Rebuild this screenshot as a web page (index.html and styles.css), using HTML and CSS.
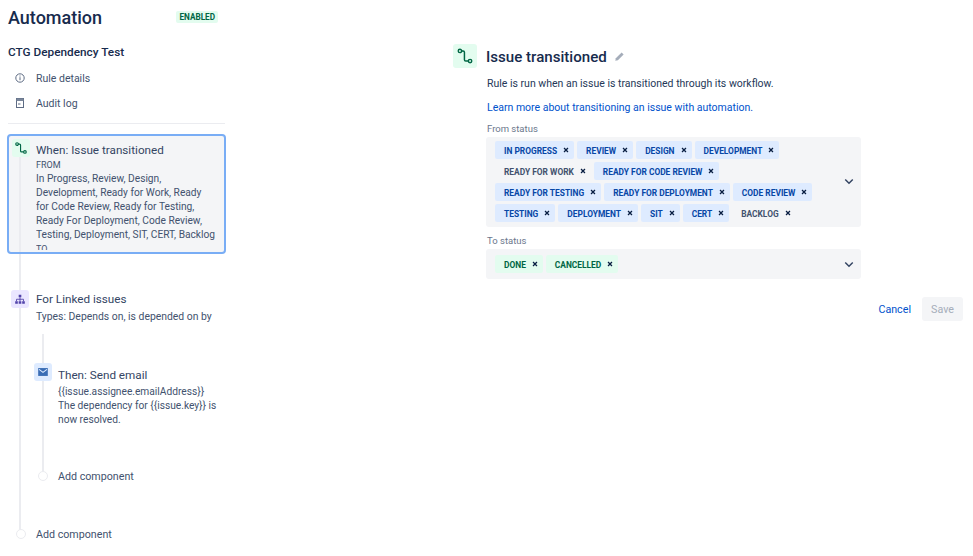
FILE: index.html
```html
<!DOCTYPE html>
<html lang="en">
<head>
<meta charset="utf-8">
<title>Automation</title>
<link rel="stylesheet" href="styles.css">
</head>
<body>
<div class="page">
  <aside class="sidebar">
    <div class="head"><h1>Automation</h1><span class="enabled">ENABLED</span></div>
    <h2>CTG Dependency Test</h2>
    <nav class="nav">
      <div class="nav-item"><svg class="nav-icon" viewBox="0 0 12 12"><circle cx="6" cy="6" r="4.2" fill="none" stroke="#5e6c84" stroke-width="1"/><rect x="5.500" y="5.200" width="1" height="3" fill="#5e6c84"/><rect x="5.500" y="3.500" width="1" height="1" fill="#5e6c84"/></svg><span>Rule details</span></div>
      <div class="nav-item"><svg class="nav-icon" viewBox="0 0 12 12"><rect x="2.500" y="1.500" width="7" height="9" fill="none" stroke="#5e6c84" stroke-width="1"/><rect x="2.500" y="1.500" width="7" height="2.500" fill="#7a869a"/><rect x="4" y="6.500" width="2.500" height="1" fill="#5e6c84"/></svg><span>Audit log</span></div>
    </nav>
    <hr class="rule">
    <div class="tree">
      <div class="card">
        <span class="badge badge-green badge-when"><svg viewBox="0 0 16 16" class="glyph"><use href="#transition"/></svg></span>
        <div class="card-title">When: Issue transitioned</div>
        <div class="card-text"><div class="small">FROM</div><div class="card-line">In Progress, Review, Design, Development, Ready for Work, Ready for Code Review, Ready for Testing, Ready For Deployment, Code Review, Testing, Deployment, SIT, CERT, Backlog</div><div class="small small-to">TO</div></div>
      </div>
      <div class="step step-linked">
        <span class="badge badge-purple"><svg viewBox="0 0 16 16" class="glyph"><path d="M6.500 3h3v3h-3zM2.500 10.500h3v3h-3zM6.500 10.500h3v3h-3zM10.500 10.500h3v3h-3z" fill="#5243aa"/><path d="M8 6v4.500M4 10.500V8.300h8v2.200" fill="none" stroke="#5243aa" stroke-width="1"/></svg></span>
        <div class="step-title">For Linked issues</div>
        <div class="step-text">Types: Depends on, is depended on by</div>
      </div>
      <div class="nested">
        <div class="step step-email">
          <span class="badge badge-blue"><svg viewBox="0 0 16 16" class="glyph"><path d="M2.500 3.500h11v9h-11z" fill="#3a6db5"/><path d="M3.500 5l4.500 3.500L12.500 5" fill="none" stroke="#deebff" stroke-width="1.200"/></svg></span>
          <div class="step-title">Then: Send email</div>
          <div class="step-text">{{issue.assignee.emailAddress}}<br>The dependency for {{issue.key}} is now resolved.</div>
        </div>
        <div class="add add-inner"><span class="dot"></span><span>Add component</span></div>
      </div>
      <div class="add add-outer"><span class="dot"></span><span>Add component</span></div>
    </div>
  </aside>
  <main class="main">
    <div class="panel">
      <div class="title-row">
        <span class="title-badge"><svg viewBox="0 0 16 16" class="title-glyph"><use href="#transition"/></svg></span>
        <h3>Issue transitioned</h3>
        <svg class="pencil" viewBox="0 0 12 12"><path d="M8.300 1.500l2.200 2.200-6.300 6.300-2.800.6.600-2.800z" fill="#a5adba"/></svg>
      </div>
      <div class="body">
        <p class="desc">Rule is run when an issue is transitioned through its workflow.</p>
        <p class="learn"><a href="#">Learn more about transitioning an issue with automation.</a></p>
        <div class="label">From status</div>
        <div class="select">
          <div class="tags">
            <span class="tag blue">IN PROGRESS<svg class="x"><use href="#x"/></svg></span>
            <span class="tag blue">REVIEW<svg class="x"><use href="#x"/></svg></span>
            <span class="tag blue">DESIGN<svg class="x"><use href="#x"/></svg></span>
            <span class="tag blue">DEVELOPMENT<svg class="x"><use href="#x"/></svg></span>
            <span class="tag plain">READY FOR WORK<svg class="x"><use href="#x"/></svg></span>
            <span class="tag blue">READY FOR CODE REVIEW<svg class="x"><use href="#x"/></svg></span>
            <span class="tag blue">READY FOR TESTING<svg class="x"><use href="#x"/></svg></span>
            <span class="tag blue">READY FOR DEPLOYMENT<svg class="x"><use href="#x"/></svg></span>
            <span class="tag blue">CODE REVIEW<svg class="x"><use href="#x"/></svg></span>
            <span class="tag blue">TESTING<svg class="x"><use href="#x"/></svg></span>
            <span class="tag blue">DEPLOYMENT<svg class="x"><use href="#x"/></svg></span>
            <span class="tag blue">SIT<svg class="x"><use href="#x"/></svg></span>
            <span class="tag blue">CERT<svg class="x"><use href="#x"/></svg></span>
            <span class="tag plain">BACKLOG<svg class="x"><use href="#x"/></svg></span>
          </div>
          <svg class="chev" viewBox="0 0 12 8"><path d="M1.500 1.500L6 6l4.500-4.500" fill="none" stroke="#344563" stroke-width="1.800"/></svg>
        </div>
        <div class="label label-to">To status</div>
        <div class="select select-to">
          <div class="tags">
            <span class="tag green">DONE<svg class="x"><use href="#x"/></svg></span>
            <span class="tag green">CANCELLED<svg class="x"><use href="#x"/></svg></span>
          </div>
          <svg class="chev" viewBox="0 0 12 8"><path d="M1.500 1.500L6 6l4.500-4.500" fill="none" stroke="#344563" stroke-width="1.800"/></svg>
        </div>
      </div>
      <div class="actions"><a href="#" class="cancel">Cancel</a><span class="save">Save</span></div>
    </div>
  </main>
</div>
<svg class="defs" width="0" height="0">
  <symbol id="transition" viewBox="0 0 16 16"><circle cx="3.500" cy="3.500" r="1.500" fill="none" stroke="#006644" stroke-width="1.300"/><path d="M5 3.500h1.300c.7 0 1.200.5 1.200 1.200v6.600c0 .7.500 1.200 1.200 1.200H11" fill="none" stroke="#006644" stroke-width="1.300"/><circle cx="12.500" cy="12.500" r="1.500" fill="none" stroke="#006644" stroke-width="1.300"/></symbol>
  <symbol id="x" viewBox="0 0 7 7"><path d="M1.200 1.200l4.600 4.600M5.800 1.200L1.200 5.800" fill="none" stroke="#091e42" stroke-width="1.500"/></symbol>
</svg>
</body>
</html>
```
FILE: styles.css
```css
* { box-sizing: border-box; }
html, body { margin: 0; padding: 0; background: #fff; }
body { font-family: Roboto, "Open Sans", "Liberation Sans", sans-serif; color: #172b4d; }
.defs { position: absolute; }
.page { display: flex; align-items: flex-start; width: 973px; height: 556px; overflow: hidden; }

.sidebar { width: 217px; margin-left: 8px; flex: none; }
.head { display: flex; justify-content: space-between; align-items: center; height: 24px; margin-top: 6px; padding-right: 7px; }
h1 { margin: 0; font-size: 18px; font-weight: 500; line-height: 24px; color: #172b4d; }
.enabled { margin-top: -2px; background: #e3fcef; color: #006644; font-size: 8.200px; font-weight: 700; line-height: 12px; padding: 0 3px; border-radius: 2px; }
h2 { margin: 12px 0 0; font-size: 11.800px; font-weight: 500; line-height: 20px; color: #172b4d; }
.nav { margin-top: 6px; display: flex; flex-direction: column; gap: 5px; }
.nav-item { display: flex; align-items: center; height: 20px; padding-left: 6px; font-size: 10.500px; color: #42526e; }
.nav-icon { width: 12px; height: 12px; margin-right: 10px; }
.rule { border: 0; border-top: 1px solid #ebecf0; margin: 10px 0 10px; }

.tree { position: relative; padding: 0; }
.tree::before { content: ""; position: absolute; left: 11px; top: 21px; width: 2px; height: 381px; background: #ebecf0; }
.card { position: relative; margin-left: -1px; width: 219px; height: 120px; padding: 6px 8px 0 27px; border: 2px solid #79adf5; border-radius: 4px; background: #f4f5f7; overflow: hidden; z-index: 1; }
.card::before { content: ""; position: absolute; left: 10px; top: 21px; width: 2px; height: 100px; background: #ebecf0; }
.badge { position: absolute; display: flex; align-items: center; justify-content: center; width: 18px; height: 18px; border-radius: 3px; }
.badge-when { left: 3px; top: 3px; }
.badge-green { background: #e3fcef; }
.badge-purple { background: #eae6ff; left: 3px; top: 0; }
.badge-blue { background: #deebff; left: 3px; top: 2px; }
.glyph { width: 14px; height: 14px; }
.card-title, .step-title { font-size: 11.700px; line-height: 16px; color: #344563; }
.card-text, .step-text { font-size: 10.200px; line-height: 14px; color: #42526e; }
.card-text { margin-top: 1px; height: 91px; overflow: hidden; }
.small { font-size: 9px; line-height: 13px; }
.small-to { line-height: 14px; }
.step { position: relative; padding-left: 28px; }
.step-linked { margin-top: 36px; padding-top: 1px; }
.step-linked .step-text { margin-top: 3px; font-size: 10.400px; }
.nested { position: relative; margin-top: 37px; padding-left: 23px; }
.nested::before { content: ""; position: absolute; left: 34px; top: -27px; width: 2px; height: 137px; background: #ebecf0; }
.step-email { padding-left: 27px; padding-top: 6px; }
.step-email .badge { left: 3px; }
.step-email .step-text { margin-top: 2px; }
.add { position: relative; display: flex; align-items: center; height: 16px; font-size: 10.700px; color: #42526e; }
.dot { position: relative; width: 10px; height: 10px; border-radius: 50%; border: 1px solid #ebecf0; background: #fff; flex: none; margin-right: 10px; }
.add-inner { margin-top: 41px; padding-left: 7px; }
.add-outer { margin-top: 42px; padding-left: 8px; }

.main { flex: 1; min-width: 0; }
.panel { padding: 44px 10px 0 228px; }
.title-row { display: flex; align-items: center; height: 24px; }
.title-badge { display: flex; align-items: center; justify-content: center; width: 24px; height: 24px; border-radius: 3px; background: #e3fcef; flex: none; }
.title-glyph { width: 18px; height: 18px; }
h3 { margin: 1px 0 0 9px; font-size: 15.100px; font-weight: 500; color: #172b4d; line-height: 24px; }
.pencil { width: 11px; height: 11px; margin-left: 7px; }
.body { margin-left: 33px; width: 375px; }
.desc { margin: 8px 0 0; font-size: 10.500px; line-height: 16px; color: #253858; padding-left: 1px; }
.learn { margin: 8px 0 0; font-size: 10.500px; line-height: 16px; padding-left: 1px; }
.learn a, .cancel { color: #0052cc; text-decoration: none; }
.label { margin-top: 6px; font-size: 9.500px; line-height: 14px; color: #6b778c; padding-left: 1px; }
.label-to { margin-top: 7px; }
.select { display: flex; justify-content: space-between; margin-top: 1px; padding: 4px 7px 0 9px; border-radius: 3px; background: #f4f5f7; height: 90px; align-items: flex-start; }
.select-to { height: 30px; padding-top: 6px; }
.tags { display: flex; flex-wrap: wrap; gap: 3px; width: 325px; }
.tag { display: inline-flex; align-items: center; height: 18px; padding: 1px 5px 0 9px; border-radius: 2px; font-size: 8.400px; font-weight: 700; }
.blue { background: #deebff; color: #0747a6; }
.plain { color: #42526e; }
.green { background: #e3fcef; color: #006644; }
.x { width: 6px; height: 6px; margin-left: 6px; margin-top: -1px; }
.chev { width: 10px; height: 7px; margin-top: 37px; }
.select-to .chev { margin-top: 6px; }
.actions { display: flex; justify-content: flex-end; align-items: center; margin-top: 18px; }
.cancel { font-size: 10.700px; margin-right: 11px; }
.save { display: flex; align-items: center; justify-content: center; width: 41px; height: 24px; border-radius: 3px; background: #f4f5f7; color: #a5adba; font-size: 10.700px; }
```
